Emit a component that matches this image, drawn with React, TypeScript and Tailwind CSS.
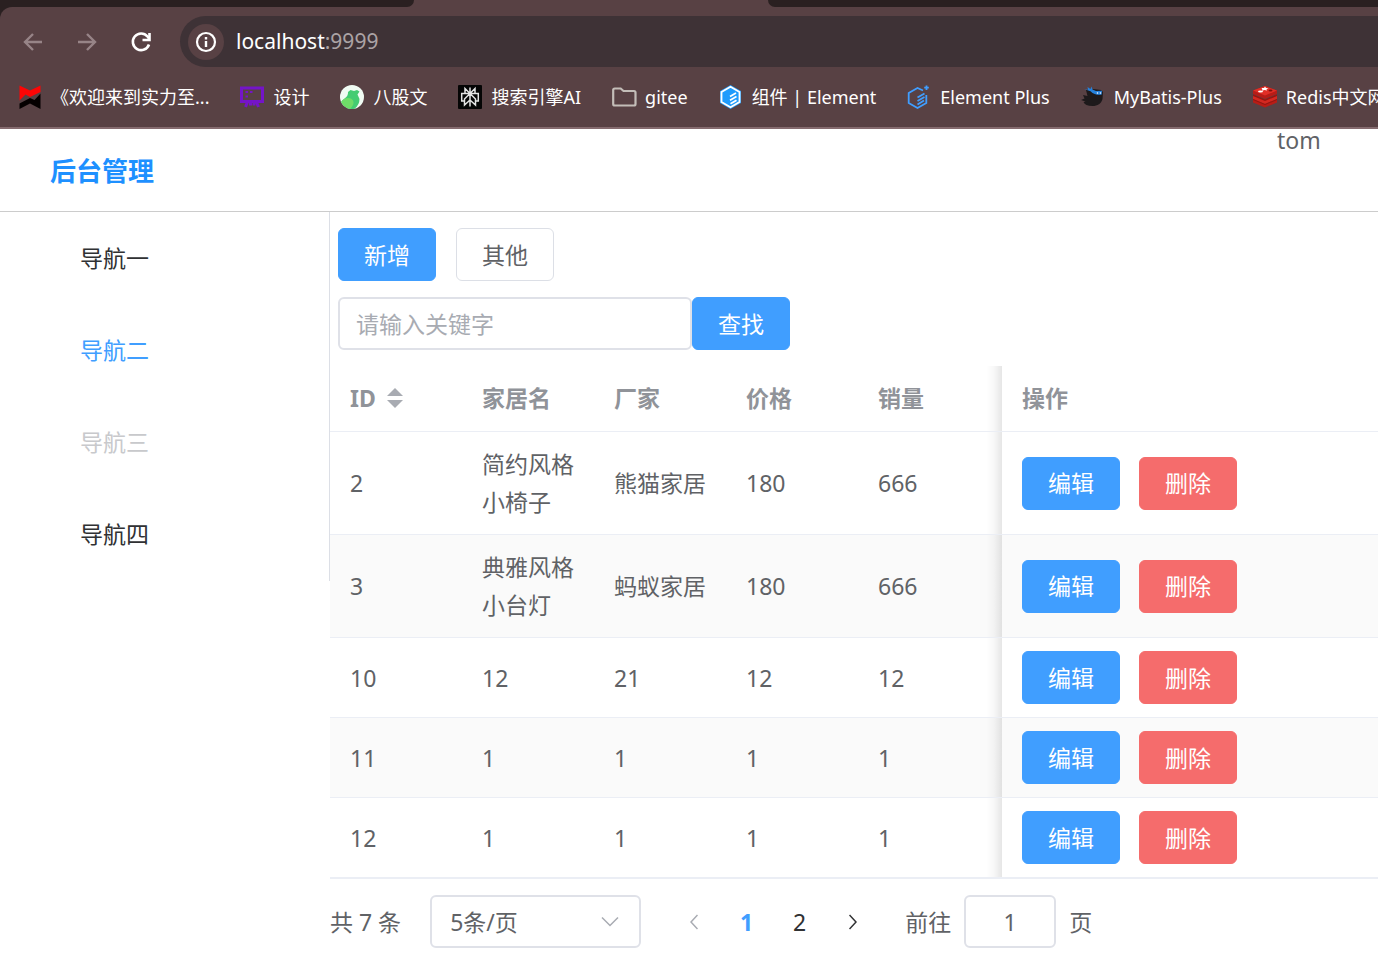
import { useState } from 'react';
import type { ReactNode } from 'react';

type Product = {
  id: number;
  name: string;
  maker: string;
  price: number;
  sales: number;
};

const products: Product[] = [
  { id: 2, name: '简约风格小椅子', maker: '熊猫家居', price: 180, sales: 666 },
  { id: 3, name: '典雅风格小台灯', maker: '蚂蚁家居', price: 180, sales: 666 },
  { id: 10, name: '12', maker: '21', price: 12, sales: 12 },
  { id: 11, name: '1', maker: '1', price: 1, sales: 1 },
  { id: 12, name: '1', maker: '1', price: 1, sales: 1 },
];

const bookmarks: { label: string; icon: ReactNode }[] = [
  {
    label: '《欢迎来到实力至...',
    icon: (
      <>
        <path d="M1.500.5 12 5.500 22.500.5v6.500L12 12 7.500 9.500 1.500 15.500Z" fill="#fe0505" />
        <path d="M22.500 8.500V24L12 18.500 1.500 24v-5.500L12 13l4.500 2Z" fill="#050000" />
      </>
    ),
  },
  {
    label: '设计',
    icon: (
      <g fill="none" stroke="#7414c8" strokeWidth="3">
        <path d="M1.500 3h21v13.500h-21ZM7.500 17l-2 5M16.500 17l2 5M10.500 17.500v3M14 17.500v3" />
        <path d="M5.500 7h2.500M10 7h2.500M5.500 11.500h2.500" strokeWidth="2" />
      </g>
    ),
  },
  {
    label: '八股文',
    icon: (
      <>
        <circle cx="12" cy="12" r="12" fill="#f0fbf3" />
        <path d="M8 7 10.500 5l3.500 1 3-1 2.500 1.500L17.500 9.500l2 4.500q0 6-5 9.700A12 12 0 0 1 1.200 17C3 13.500 8.500 12.500 8 7Z" fill="#43cc72" />
        <path d="M1.200 17C4 11.500 13 12 13.500 17c.3 3-1.500 5-3.500 6.800A12 12 0 0 1 1.200 17Z" fill="#6fdc68" />
      </>
    ),
  },
  {
    label: '搜索引擎AI',
    icon: (
      <>
        <rect width="24" height="24" rx="1" fill="#050505" />
        <path
          d="M12 2.500v19M12 8.500l-5-5v5M12 8.500l5-5v5M12 8.500l-5.500 5.500v6L12 15M12 8.500l5.500 5.500v6L12 15M6.500 16H3.700V8.500h16.600V16h-2.800"
          fill="none"
          stroke="#e4e4e4"
          strokeWidth="1.500"
        />
      </>
    ),
  },
  {
    label: 'gitee',
    icon: (
      <path
        d="M1.200 19V5q0-1.500 1.500-1.500h6L11.500 6H22q1.500 0 1.500 1.500V19q0 1.500-1.500 1.500H2.700q-1.500 0-1.500-1.500Z"
        fill="none"
        stroke="#c3bdb8"
        strokeWidth="2.200"
      />
    ),
  },
  {
    label: '组件 | Element',
    icon: (
      <>
        <path d="M11.500 0 22 6v12l-10.500 6L1 18V6Z" fill="#209cfc" />
        <path d="M11.500 1.800 20.500 7v10l-9 5.200-9-5.200V7Z" fill="none" stroke="#fff" strokeWidth="1.800" />
        <path d="m11 11.500 6-3.500M11 15.200l6.500-3.700M11.500 18.800l6-3.500" fill="none" stroke="#fff" strokeWidth="1.800" />
      </>
    ),
  },
  {
    label: 'Element Plus',
    icon: (
      <g fill="none" stroke="#409eff" strokeWidth="1.800">
        <path d="M16 5.500 10.500 3 1.700 8v10l8.800 5 8.800-5v-8" />
        <path d="m10.500 12.500 7-4M10.500 16l7-4M10.500 19.500l6.500-4M19.500.5v4.500M17.200 2.700h4.600" />
      </g>
    ),
  },
  {
    label: 'MyBatis-Plus',
    icon: (
      <>
        <path d="m5 5 7-1 8 1 2 2-.5 7c-1 4.500-5 7-10 7-5 0-8-1.500-9-4l2-.5L0 15l3.500-1.500L2 10l4.500 1Z" fill="#1d191b" />
        <path d="m3 4 4 .8L6.500 2l3 2 1-2.500 1 3L15 6l6-.3-.5 4c-4 .5-8-.5-11-3.500Z" fill="#2581dc" />
        <path d="m16 7.500 1 1m2-1 1 1" stroke="#dceaff" strokeWidth="1.500" />
      </>
    ),
  },
  {
    label: 'Redis中文网',
    icon: (
      <>
        <path d="m0 14 12 5 12-5v3.500L12 22.500 0 17.500Z" fill="#b71d17" />
        <path d="m0 10 12 5 12-5v4L12 19 0 14Z" fill="#d42820" />
        <path d="m0 9.500 12 5 12-5v1.500L12 16 0 11Z" fill="#98140f" />
        <path d="m0 5.500 12-4.500 12 4.500v3.500L12 14 0 9Z" fill="#b61c17" />
        <path d="m0 5.500 12-4.500 12 4.500L12 10.500Z" fill="#e02e26" />
        <path d="m0 14 12 5 12-5v1L12 20 0 15Z" fill="#98140f" />
        <path d="M8.500 3h2.500l1-1.500 1 1.500 2.500.2-2 1 .5 1.300-2.500-.5-2.500.8.300-1.500Z" fill="#fff" />
        <ellipse cx="7.500" cy="6.500" rx="2.500" ry="1" fill="#fff" />
        <ellipse cx="17.500" cy="5.500" rx="2" ry="1" fill="#7d0f0b" />
      </>
    ),
  },
];

const Browser = () => (
  <header className="bg-[#2a2021] text-white">
    {/* Tab strip */}
    <div className="flex h-[7px]">
      <div className="w-[402px]" />
      <div className="flex justify-between w-[378px] bg-[#584144]">
        <div className="w-3 bg-[#2a2021] rounded-br-xl" />
        <div className="w-3 bg-[#2a2021] rounded-bl-xl" />
      </div>
    </div>

    <div className="rounded-tl-xl bg-[#584144]">
      {/* Toolbar */}
      <div className="flex items-center pt-[9px]">
        <div className="flex items-center gap-[30px] pl-[21px]">
          <button aria-label="Back" className="text-[#978487]">
            <svg className="w-6 h-6" viewBox="0 0 24 24" fill="none" stroke="currentColor" strokeWidth="2.400">
              <path d="M21 12H4.500M12 4l-8 8 8 8" />
            </svg>
          </button>
          <button aria-label="Forward" className="text-[#978487]">
            <svg className="w-6 h-6" viewBox="0 0 24 24" fill="none" stroke="currentColor" strokeWidth="2.400">
              <path d="M3 12h16.500M12 4l8 8-8 8" />
            </svg>
          </button>
          <button aria-label="Reload">
            <svg className="w-6 h-6" viewBox="0 0 24 24" fill="none" stroke="currentColor" strokeWidth="2.600">
              <path d="M20 14.500A8.300 8.300 0 1 1 18.500 6.500L20 8.500" />
              <path d="M20.500 3v7h-7" />
            </svg>
          </button>
        </div>
        <div className="flex flex-1 items-center h-[51px] ml-[27px] pl-2 rounded-l-full bg-[#3e3236]">
          <button aria-label="Site information" className="flex items-center justify-center w-9 h-9 rounded-full bg-[#584144]">
            <svg className="w-6 h-6" viewBox="0 0 24 24" fill="none" stroke="currentColor" strokeWidth="2.200">
              <circle cx="12" cy="12" r="9" />
              <path d="M12 11v6M12 7v2.500" strokeWidth="2.400" />
            </svg>
          </button>
          <div className="ml-3 pb-0.5 text-[21px] leading-8">
            localhost<span className="text-[#aba3a5]">:9999</span>
          </div>
        </div>
      </div>

      {/* Bookmarks */}
      <nav className="flex items-center gap-[31px] h-[62px] pl-[18px] border-b-2 border-[#856b6f] overflow-hidden">
        {bookmarks.map((b) => (
          <a key={b.label} href="#" className="flex shrink-0 items-center gap-[9px] text-lg whitespace-nowrap">
            <svg className="w-6 h-6 overflow-visible" viewBox="0 0 24 24">
              {b.icon}
            </svg>
            {b.label}
          </a>
        ))}
      </nav>
    </div>
  </header>
);

const Sidebar = () => (
  <nav className="flex flex-col shrink-0 self-start w-[330px] pb-px border-r border-[#dcdfe6] text-[#303133]">
    <a href="#" className="h-[92px] pl-20 leading-[92px]">导航一</a>
    <a href="#" className="h-[92px] pl-20 leading-[92px] text-[#409eff]">导航二</a>
    <button disabled className="h-[92px] pl-20 leading-[92px] text-left text-[#c8c9cc]">导航三</button>
    <a href="#" className="h-[92px] pl-20 leading-[92px]">导航四</a>
  </nav>
);

type ButtonProps = {
  children: ReactNode;
  kind?: 'primary' | 'danger' | 'plain';
};

const kinds = {
  primary: 'border-[#409eff] bg-[#409eff] text-white',
  danger: 'border-[#f56c6c] bg-[#f56c6c] text-white',
  plain: 'border-[#dcdfe6] bg-white text-[#606266]',
};

const Button = ({ children, kind = 'primary' }: ButtonProps) => (
  <button className={`shrink-0 w-[98px] h-[53px] rounded-md border ${kinds[kind]}`}>{children}</button>
);

// Shade on the left edge of the fixed column
const FixedShadow = () => (
  <div className="absolute inset-y-0 -left-4 w-4 bg-linear-to-r from-transparent via-black/3 to-black/10" />
);

const ProductTable = () => (
  <table className="w-full table-fixed border-separate border-spacing-0 text-left leading-[38px]">
    <colgroup>
      <col className="w-[132px]" />
      <col className="w-[132px]" />
      <col className="w-[132px]" />
      <col className="w-[132px]" />
      <col className="w-[144px]" />
      <col />
    </colgroup>
    <thead>
      <tr className="text-[#909399] [&>th]:border-b [&>th]:border-[#ebeef5] [&>th]:pt-[13px] [&>th]:pb-[14px] [&>th]:pl-5 [&>th]:font-bold">
        <th>
          <button className="flex items-center gap-[11px] font-bold">
            ID
            <svg className="w-4 h-5" viewBox="0 0 16 20" fill="#a8abb2">
              <path d="M0 8 8 0l8 8ZM0 12h16l-8 8Z" />
            </svg>
          </button>
        </th>
        <th>家居名</th>
        <th>厂家</th>
        <th>价格</th>
        <th>销量</th>
        <th className="relative">
          <FixedShadow />
          操作
        </th>
      </tr>
    </thead>
    <tbody>
      {products.map((p) => (
        <tr
          key={p.id}
          className="even:bg-[#fafafa] [&>td]:border-b [&>td]:border-[#ebeef5] last:[&>td]:border-b-2 [&>td]:py-[13px] [&>td]:pl-5"
        >
          <td>{p.id}</td>
          <td className="pr-5">{p.name}</td>
          <td>{p.maker}</td>
          <td>{p.price}</td>
          <td>{p.sales}</td>
          <td className="relative">
            <FixedShadow />
            <div className="flex gap-[19px]">
              <Button>编辑</Button>
              <Button kind="danger">删除</Button>
            </div>
          </td>
        </tr>
      ))}
    </tbody>
  </table>
);

const Pagination = () => {
  const [page, setPage] = useState(1);

  return (
    <div className="flex items-center h-[53px] mt-4">
      <span>共 7 条</span>
      <div className="relative ml-[29px]">
        <select
          aria-label="每页条数"
          className="appearance-none w-[211px] h-[53px] pl-[18px] rounded-md border-2 border-[#dfe1e8] bg-white"
        >
          <option>5条/页</option>
          <option>10条/页</option>
        </select>
        <svg
          className="absolute right-[22px] top-[21px] w-[18px] h-3 pointer-events-none"
          viewBox="0 0 18 12"
          fill="none"
          stroke="#a8abb2"
          strokeWidth="1.500"
        >
          <path d="m1 1.500 8 8 8-8" />
        </svg>
      </div>
      <div className="flex items-center ml-[26px] text-[#303133]">
        <button aria-label="上一页" disabled={page === 1} className="flex justify-center w-[53px] text-[#a8abb2]">
          <svg className="w-2 h-4" viewBox="0 0 8 16" fill="none" stroke="currentColor" strokeWidth="1.500">
            <path d="M7.500 1 1 8l6.500 7" />
          </svg>
        </button>
        {[1, 2].map((n) => (
          <button
            key={n}
            onClick={() => setPage(n)}
            className={page === n ? 'w-[53px] font-bold text-[#409eff]' : 'w-[53px]'}
          >
            {n}
          </button>
        ))}
        <button aria-label="下一页" onClick={() => setPage(2)} className="flex justify-center w-[53px]">
          <svg className="w-2 h-4" viewBox="0 0 8 16" fill="none" stroke="currentColor" strokeWidth="1.500">
            <path d="m.5 1 6.500 7-6.500 7" />
          </svg>
        </button>
      </div>
      <label className="flex items-center ml-[26px]">
        前往
        <input
          value={page}
          onChange={(e) => setPage(Number(e.target.value) || 1)}
          className="w-[92px] h-[53px] mx-[13px] rounded-md border-2 border-[#dfe1e8] text-center"
        />
        页
      </label>
    </div>
  );
};

const App = () => (
  <div className="min-h-screen overflow-x-hidden bg-white font-['Noto_Sans','Noto_Sans_CJK_SC',sans-serif]">
    <Browser />

    <div className="text-[23px] leading-[34px] text-[#606266]">
      {/* Page header */}
      <div className="flex h-[83px] border-b border-[#ccc]">
        <h1 className="pl-[50px] text-[26px] leading-[84px] font-bold text-[#1e90ff]">后台管理</h1>
        <div className="flex-1" />
        <div className="w-[101px] leading-[22px]">tom</div>
      </div>

      <div className="flex">
        <Sidebar />
        <main className="flex-1 min-w-0">
          <div className="flex gap-5 px-2 pt-4">
            <Button>新增</Button>
            <Button kind="plain">其他</Button>
          </div>
          <div className="flex px-2 py-4">
            <input
              aria-label="关键字"
              placeholder="请输入关键字"
              className="w-[354px] h-[53px] px-4 rounded-md border-2 border-[#dfe1e8] placeholder:text-[#a8abb2]"
            />
            <Button>查找</Button>
          </div>
          <ProductTable />
          <Pagination />
        </main>
      </div>
    </div>
  </div>
);

export default App;
